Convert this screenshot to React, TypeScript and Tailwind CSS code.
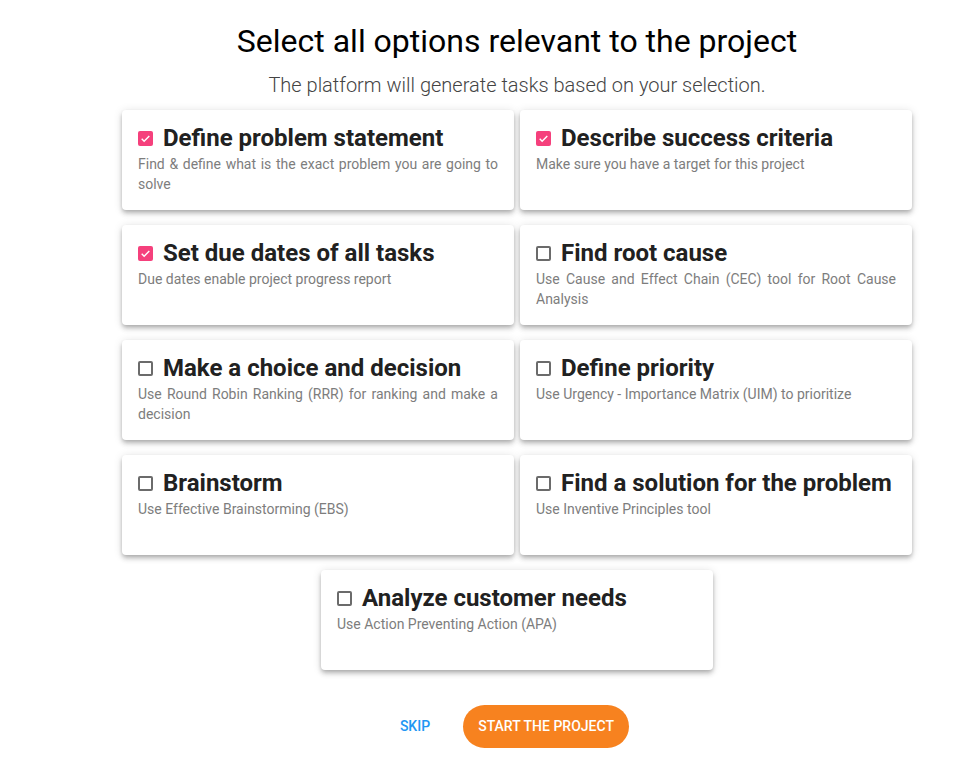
const options = [
  { title: "Define problem statement", desc: "Find & define what is the exact problem you are going to solve", checked: true },
  { title: "Describe success criteria", desc: "Make sure you have a target for this project", checked: true },
  { title: "Set due dates of all tasks", desc: "Due dates enable project progress report", checked: true },
  { title: "Find root cause", desc: "Use Cause and Effect Chain (CEC) tool for Root Cause Analysis", checked: false },
  { title: "Make a choice and decision", desc: "Use Round Robin Ranking (RRR) for ranking and make a decision", checked: false },
  { title: "Define priority", desc: "Use Urgency - Importance Matrix (UIM) to prioritize", checked: false },
  { title: "Brainstorm", desc: "Use Effective Brainstorming (EBS)", checked: false },
  { title: "Find a solution for the problem", desc: "Use Inventive Principles tool", checked: false },
  { title: "Analyze customer needs", desc: "Use Action Preventing Action (APA)", checked: false },
];

function Checkbox({ checked }: { checked: boolean }) {
  if (checked) {
    return (
      <span className="flex h-[15px] w-[15px] shrink-0 items-center justify-center rounded-[2px] bg-[#f5407c]">
        <svg viewBox="0 0 24 24" className="h-[13px] w-[13px]" fill="none" stroke="white" strokeWidth="2.6">
          <path d="M5 12.5l4.5 4.5L19 7.5" />
        </svg>
      </span>
    );
  }
  return <span className="h-[15px] w-[15px] shrink-0 rounded-[2px] border-2 border-[#6b6b6b]" />;
}

function OptionCard({ title, desc, checked }: { title: string; desc: string; checked: boolean }) {
  return (
    <div className="h-[100px] w-[392px] rounded-[4px] bg-white px-4 pt-3 shadow-[0_2px_4px_-1px_rgba(0,0,0,0.2),0_4px_5px_0_rgba(0,0,0,0.14),0_1px_10px_0_rgba(0,0,0,0.12)]">
      <div className="flex h-[32px] items-center gap-[10px]">
        <Checkbox checked={checked} />
        <span className="text-[24px] font-bold leading-[32px] text-[#212121]">{title}</span>
      </div>
      <p className="text-justify text-[14px] leading-[20px] text-[#7d7d7d]">{desc}</p>
    </div>
  );
}

export default function App() {
  const last = options[options.length - 1];
  return (
    <div className="min-h-[770px] bg-white pl-[59px] font-['Roboto',sans-serif]">
      <div className="flex flex-col items-center pt-[21px]">
        <h1 className="text-[32px] leading-[40px] text-black">Select all options relevant to the project</h1>
        <p className="mt-[11px] text-[20px] font-light leading-[26px] text-[#444]">The platform will generate tasks based on your selection.</p>
        <div className="mt-[12px] grid grid-cols-[392px_392px] gap-x-[6px] gap-y-[15px]">
          {options.slice(0, 8).map((o) => (
            <OptionCard key={o.title} {...o} />
          ))}
        </div>
        <div className="mt-[15px]">
          <OptionCard {...last} />
        </div>
        <div className="mr-[5px] mt-[35px] flex items-center gap-[33px]">
          <button className="px-0 text-[14px] font-medium uppercase text-[#2196f3]">Skip</button>
          <button className="h-[43px] w-[166px] rounded-full bg-[#f7821f] text-[14px] font-medium uppercase text-white">
            Start the project
          </button>
        </div>
      </div>
    </div>
  );
}
